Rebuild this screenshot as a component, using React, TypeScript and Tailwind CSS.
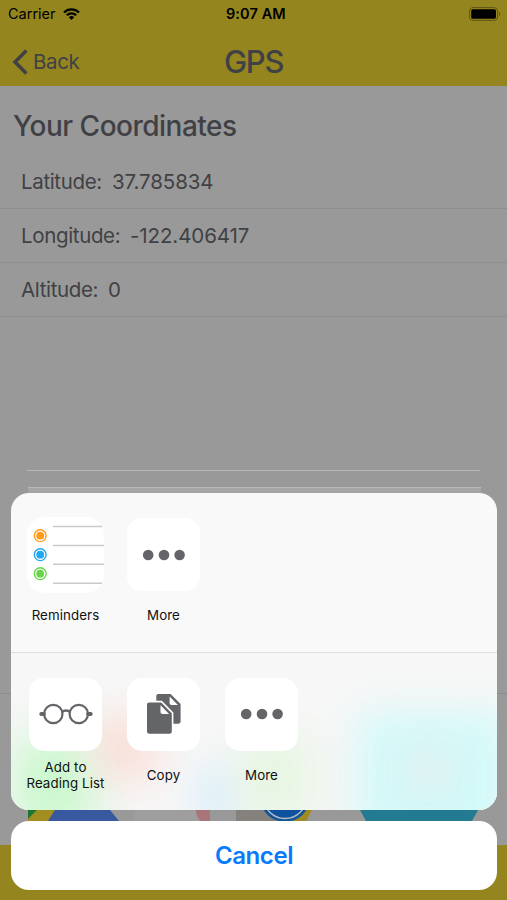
import clsx from "clsx";
import type { ReactNode } from "react";

const coordinates = [
  { label: 'Latitude:', value: '37.785834', labelClass: 'w-[91px]' },
  { label: 'Longitude:', value: '-122.406417', labelClass: 'w-[109px]' },
  { label: 'Altitude:', value: '0', labelClass: 'w-[87px]' },
]

function StatusBar() {
  return (
    <div className="relative h-7 flex items-center justify-between pl-2 pr-[6px] text-black">
      <div className="flex items-center gap-[7px]">
        <span className="text-[14.5px] leading-7">Carrier</span>
        <svg width="17" height="12" viewBox="0 0 17 12" fill="none" stroke="currentColor" strokeWidth="2.3">
          <path d="M1 4.5C5.2.4 11.8.4 16 4.5" />
          <path d="M3.8 7.3c2.6-2.6 6.8-2.6 9.4 0" />
          <path d="M8.5 12 5.8 9.2c1.5-1.5 3.9-1.5 5.4 0z" fill="currentColor" stroke="none" />
        </svg>
      </div>
      <span className="absolute left-[226px] text-[14.5px] leading-7 font-semibold tracking-[0.1px] whitespace-nowrap">9:07 AM</span>
      <svg width="32" height="14" viewBox="0 0 32 14">
        <rect x=".6" y=".6" width="28" height="12.8" rx="3.4" fill="none" stroke="#5f5515" strokeWidth="1" />
        <rect x="2.2" y="2.3" width="24.8" height="9.4" rx="1.6" fill="#000" />
        <path d="M30 4.8c1.6.6 1.6 3.8 0 4.4z" fill="#5f5515" />
      </svg>
    </div>
  )
}

function Dots() {
  return (
    <svg width="44" height="12" viewBox="0 0 44 12" fill="#646569">
      <circle cx="6.2" cy="6" r="5.3" />
      <circle cx="22" cy="6" r="5.3" />
      <circle cx="37.6" cy="6" r="5.3" />
    </svg>
  )
}

function RemindersIcon() {
  const rows = [
    { y: 18.7, color: '#ff9a1a' },
    { y: 37.7, color: '#22a8f2' },
    { y: 56.7, color: '#67d548' },
  ]

  return (
    <svg width="77" height="76" viewBox="0 0 77 76">
      {rows.map((row) => (
        <g key={row.y} fill={row.color}>
          <circle cx="13.2" cy={row.y} r="5.9" fill="#fff" stroke={row.color} strokeWidth="1.4" />
          <circle cx="13.2" cy={row.y} r="3.9" />
        </g>
      ))}
      <path d="M26 9.4h49M26 28.4h51M26 47.3h51M26 66.2h49" stroke="#c9c9c9" strokeWidth="1.5" />
    </svg>
  )
}

function GlassesIcon() {
  return (
    <svg width="54" height="22" viewBox="0 0 54 22" fill="none" stroke="#646569" strokeWidth="2.2">
      <circle cx="14.3" cy="11" r="9.2" />
      <circle cx="39.8" cy="11" r="9.2" />
      <path d="M23 9.2c2-2.2 6-2.2 8 0" strokeWidth="2.4" />
      <path d="M2.2 11H5M49 11h2.8" strokeWidth="3.8" strokeLinecap="round" />
    </svg>
  )
}

function CopyIcon() {
  return (
    <svg width="36" height="42" viewBox="0 0 36 42">
      <path d="M12.4 1h12.2l10 10v17.6c0 1.2-.9 2.1-2.1 2.1H10.3V3.1C10.3 1.9 11.2 1 12.4 1z" fill="#646569" />
      <path d="M23.6 3.4v6.5c0 1.2.8 2 2 2h6.3z" fill="#fff" />
      <path
        d="M3.2 9.4h12l10.6 10.8v18.4c0 1.3-.9 2.2-2.2 2.2H3.2c-1.3 0-2.2-.9-2.2-2.2v-27c0-1.3.9-2.2 2.2-2.2z"
        fill="#646569"
        stroke="#fff"
        strokeWidth="3.2"
        paintOrder="stroke"
      />
      <path d="M14.5 12.3V19c0 1.2.8 2 2 2h6.6z" fill="#fff" />
    </svg>
  )
}

function ShareItem({ label, wide, raised, children }: { label: ReactNode, wide?: boolean, raised?: boolean, children: ReactNode }) {
  return (
    <div className="w-[98px] flex flex-col items-center">
      <div
        className={clsx(
          'flex items-center justify-center bg-white',
          wide ? 'w-[77px] h-[76px] rounded-[18px] mt-[-1px] mb-[-2px]' : 'w-[73px] h-[73px] rounded-[15px] pl-px',
          raised && 'pb-[2px]'
        )}
      >
        {children}
      </div>
      <div className="h-[47px] pl-px flex items-center text-center text-[13.3px] leading-4 tracking-[0.1px] text-[#111] whitespace-nowrap">
        {label}
      </div>
    </div>
  )
}

function AppLogos() {
  return (
    <svg className="block" width="507" height="151" viewBox="0 694 507 151">
      <path d="M28 810v11h22l8-11z" fill="#8f8220" />
      <path d="M28 810h9l-9 9z" fill="#1c7433" />
      <path d="M37 810h18l-7 11H28v-2z" fill="#a18d20" />
      <path d="M55 810h55l9 11H48z" fill="#3858a0" />
      <path d="M134 810h76v11h-76z" fill="#9e9e9e" />
      <path d="M196 810h14v11h-9c-3-2-5-6-5-11z" fill="#a87679" />
      <path d="M236 810h50v11h-50z" fill="#85827e" />
      <path d="M300 810h12l-6 11h-14z" fill="#a18a20" />
      <circle cx="285" cy="797" r="25" fill="#145596" />
      <circle cx="285" cy="797" r="21.5" fill="#0e519c" stroke="#b3bdc7" strokeWidth="1.4" />
      <path d="M360 810h118l-6 11H366z" fill="#237b91" />
    </svg>
  )
}

export default function App() {
  return (
    <div className="relative w-full h-[900px] overflow-hidden bg-[#999] font-['Inter',sans-serif] text-[#404145]">
      <header className="h-[86px] bg-[#94851f]">
        <StatusBar />
        <div className="relative h-[58px] flex items-center pl-3">
          <button className="flex items-center gap-[5px] pt-[9px] text-[20.5px] leading-7 tracking-[-0.35px]">
            <svg width="16" height="26" viewBox="0 0 16 26" fill="none" stroke="currentColor" strokeWidth="3.5">
              <path d="M14.4 1.5 3 13l11.4 11.5" />
            </svg>
            Back
          </button>
          <h1 className="absolute left-[224px] top-[16px] text-[31px] leading-9 font-medium tracking-[-1.3px]">GPS</h1>
        </div>
      </header>

      <main>
        <h2 className="h-[69px] pl-[13px] pt-[22px] text-[28px] leading-9 font-medium tracking-[-0.5px]">Your Coordinates</h2>
        <ul>
          {coordinates.map((item) => (
            <li key={item.label} className="h-[54px] flex items-center pl-[21px] pt-[2px] border-b border-[#8e8e8e] text-[20.5px] tracking-[-0.35px]">
              <span className={item.labelClass}>{item.label}</span>
              <span className="tracking-[-0.1px]">{item.value}</span>
            </li>
          ))}
        </ul>
        <div className="mx-[27px] mt-[153px] border-t border-[#b8b8b8]" />
        <div className="ml-[28px] mr-[26px] mt-4 h-[6px] bg-[#a5a5a5] border-t border-[#b8b8b8]" />
        <div className="mt-[200px] border-t border-[#8c8c8c]" />
        <AppLogos />
      </main>
      <footer className="h-[61px] bg-[#94851f]" />

      <div className="absolute inset-0 flex flex-col justify-end gap-[11px] pl-[11px] pr-[10px] pb-[10px]">
        <section className="h-[317px] rounded-[18px] overflow-hidden bg-[#f9f9f9]">
          <div className="h-[160px] flex pl-[5px] pt-[25px] border-b border-[#dedede]">
            <ShareItem label="Reminders" wide><RemindersIcon /></ShareItem>
            <ShareItem label="More"><Dots /></ShareItem>
          </div>
          <div className="relative h-[157px] overflow-hidden bg-[#f7f7f7]">
            {/* colours of the app icons bleeding through the frosted sheet */}
            <div className="absolute left-[5px] top-[85px] w-[75px] h-[95px] bg-[#c6f8c9] blur-[24px]" />
            <div className="absolute left-[85px] top-[65px] w-[60px] h-[60px] bg-[#fcd6ce] opacity-80 blur-[20px]" />
            <div className="absolute left-[185px] top-[115px] w-[44px] h-[60px] bg-[#dcf0fb] blur-[18px]" />
            <div className="absolute left-[232px] top-[85px] w-[65px] h-[80px] bg-[#e2f5dc] opacity-90 blur-[22px]" />
            <div className="absolute left-[348px] top-[60px] w-[150px] h-[130px] bg-[#d2f9f9] blur-[20px]" />
            <div className="absolute left-[390px] top-[92px] w-[55px] h-[50px] bg-[#e2f0f0] opacity-80 blur-[16px]" />
            <div className="relative flex pl-[5px] pt-[25px]">
              <ShareItem label={<>Add to<br />Reading List</>} raised><GlassesIcon /></ShareItem>
              <ShareItem label="Copy" raised><CopyIcon /></ShareItem>
              <ShareItem label="More" raised><Dots /></ShareItem>
            </div>
          </div>
        </section>
        <button className="h-[69px] rounded-[18px] bg-white text-[#087afb] text-[24px] font-semibold tracking-[-0.4px]">Cancel</button>
      </div>
    </div>
  )
}
